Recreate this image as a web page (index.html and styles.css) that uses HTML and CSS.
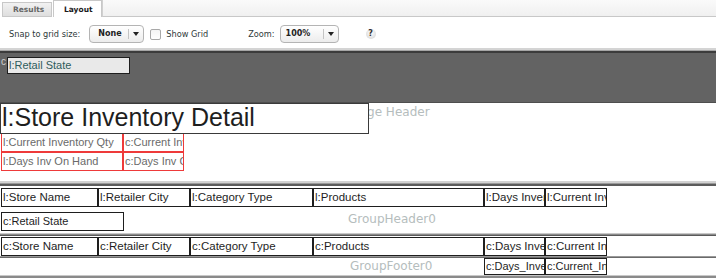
FILE: index.html
```html
<!DOCTYPE html>
<html>
<head>
<meta charset="utf-8">
<link rel="stylesheet" href="styles.css">
</head>
<body>
<div class="tabs">
  <div class="tab">Results</div>
  <div class="tab active">Layout</div>
  <div class="tab-fill"></div>
</div>
<div class="toolbar">
  <span class="tb-label snap">Snap to grid size:</span>
  <div class="select sel-none"><span class="sel-text">None</span><span class="sel-btn"><span class="arrow"></span></span></div>
  <span class="checkbox"></span>
  <span class="tb-label">Show Grid</span>
  <span class="tb-label zoom">Zoom:</span>
  <div class="select sel-zoom"><span class="sel-text">100%</span><span class="sel-btn"><span class="arrow"></span></span></div>
  <span class="help">?</span>
</div>
<div class="canvas">
  <div class="sep sep-top"></div>
  <section class="band band-dark">
    <span class="ghost">c</span>
    <div class="ctl ctl-state">l:Retail State</div>
  </section>
  <section class="band band-page">
    <span class="band-label lbl-page">Page Header</span>
    <div class="ctl ctl-title">l:Store Inventory Detail</div>
    <div class="red-grid">
      <div class="red">l:Current Inventory Qty</div>
      <div class="red">c:Current Inventory Qty</div>
      <div class="red">l:Days Inv On Hand</div>
      <div class="red">c:Days Inv On Hand</div>
    </div>
  </section>
  <div class="sep"></div>
  <section class="band band-group">
    <span class="band-label lbl-group">GroupHeader0</span>
    <div class="row">
      <div class="cell w1">l:Store Name</div>
      <div class="cell w2">l:Retailer City</div>
      <div class="cell w3">l:Category Type</div>
      <div class="cell w4">l:Products</div>
      <div class="cell w5">l:Days Inventory</div>
      <div class="cell w6">l:Current Inventory</div>
    </div>
    <div class="cell ctl-cstate">c:Retail State</div>
  </section>
  <div class="sep sep-mid"></div>
  <section class="band band-detail">
    <div class="row">
      <div class="cell w1">c:Store Name</div>
      <div class="cell w2">c:Retailer City</div>
      <div class="cell w3">c:Category Type</div>
      <div class="cell w4">c:Products</div>
      <div class="cell w5">c:Days Inventory</div>
      <div class="cell w6">c:Current Inventory</div>
    </div>
  </section>
  <div class="sep sep-thin"></div>
  <section class="band band-footer">
    <span class="band-label lbl-footer">GroupFooter0</span>
    <div class="row row-footer">
      <div class="cell w5 fcell">c:Days_Inventory</div>
      <div class="cell w6 fcell">c:Current_Inventory</div>
    </div>
  </section>
  <div class="sep sep-bottom"></div>
</div>
</body>
</html>
```

FILE: styles.css
```css
html, body {
  margin: 0;
  padding: 0;
  background: #fff;
}
body {
  width: 716px;
  height: 278px;
  overflow: hidden;
  font-family: "DejaVu Sans", Verdana, sans-serif;
}

/* tabs */
.tabs {
  display: flex;
  height: 17px;
  align-items: flex-end;
}
.tab {
  box-sizing: border-box;
  font-size: 7.5px;
  font-weight: bold;
  color: #666;
  height: 15px;
  width: 50px;
  margin-left: 2px;
  padding-left: 10px;
  line-height: 13px;
  background: linear-gradient(#f2f2f2, #dedede);
  border: 1px solid #c8c8c8;
}
.tab.active {
  height: 17px;
  width: 49px;
  margin-left: 1px;
  background: #fff;
  color: #1a1a1a;
  border-bottom: none;
  line-height: 17px;
}
.tab-fill {
  flex: 1;
  height: 17px;
  box-sizing: border-box;
  border-left: 1px solid #d0d0d0;
  border-bottom: 1px solid #c8c8c8;
  background: linear-gradient(#fafafa, #f0f0f0);
}

/* toolbar */
.toolbar {
  display: flex;
  align-items: center;
  height: 31px;
  padding-top: 3px;
  box-sizing: border-box;
}
.tb-label {
  font-size: 8.2px;
  color: #2f3a3a;
}
.snap { margin-left: 9px; }
.select {
  box-sizing: border-box;
  display: flex;
  align-items: stretch;
  height: 18px;
  border: 1px solid #b4b4b4;
  border-radius: 4px;
  background: linear-gradient(#ffffff, #ececec);
}
.sel-none { width: 55px; margin-left: 9px; }
.sel-zoom { width: 59px; margin-left: 5px; }
.sel-text {
  flex: 1;
  font-size: 8px;
  font-weight: bold;
  color: #222;
  line-height: 16px;
  padding-left: 8px;
}
.sel-zoom .sel-text { padding-left: 5px; }
.sel-btn {
  width: 14px;
  display: flex;
  align-items: center;
  justify-content: center;
  border-left: 1px solid #c4c4c4;
  margin: 3px 0;
}
.arrow {
  width: 0;
  height: 0;
  border-left: 3px solid transparent;
  border-right: 3px solid transparent;
  border-top: 4px solid #222;
}
.checkbox {
  box-sizing: border-box;
  width: 11px;
  height: 11px;
  margin-left: 6px;
  margin-right: 5px;
  border: 1px solid #a8a8a8;
  border-radius: 2px;
  background: linear-gradient(#f4f4f4, #ffffff);
}
.zoom { margin-left: 40px; }
.help {
  margin-left: 27px;
  width: 10px;
  height: 10px;
  border-radius: 50%;
  background: radial-gradient(circle at 50% 40%, #ffffff, #d0d0d0);
  font-size: 8px;
  font-weight: bold;
  color: #333;
  text-align: center;
  line-height: 10px;
}

/* canvas */
.canvas {
  font-family: "Liberation Sans", Arial, sans-serif;
}
.sep {
  height: 6px;
  background: linear-gradient(#ffffff 0 1px, #d2d2d2 1px 3px, #9a9a9a 3px 4px, #5c5c5c 4px 6px);
}
.sep-top {
  height: 5px;
  background: linear-gradient(#d4d4d4 0 2px, #a6a6a6 2px 3px, #3c3c3c 3px 5px);
}
.sep-mid {
  height: 3px;
  background: linear-gradient(#c8c8c8 0 1px, #8a8a8a 1px 2px, #5a5a5a 2px 3px);
}
.sep-thin {
  height: 2px;
  background: linear-gradient(#9a9a9a 0 1px, #6a6a6a 1px 2px);
}
.sep-bottom {
  height: 3px;
  background: linear-gradient(#c8c8c8 0 1px, #8a8a8a 1px 3px);
}
.band {
  position: relative;
  box-sizing: border-box;
}
.band-dark {
  height: 50px;
  background: #636363;
  border-bottom: 1px solid #4e4e4e;
  padding: 4px 0 0 7px;
}
.ghost {
  position: absolute;
  left: 1px;
  top: 3px;
  font-size: 10px;
  color: #cfcfcf;
}
.ctl {
  box-sizing: border-box;
  white-space: nowrap;
  overflow: hidden;
}
.ctl-state {
  position: relative;
  width: 123px;
  height: 17px;
  border: 1px solid #1e1e1e;
  background: #e9e9e9;
  color: #2f5c5c;
  font-size: 11px;
  line-height: 14px;
  padding-left: 1px;
}
.band-page {
  height: 77px;
}
.band-label {
  position: absolute;
  font-family: "DejaVu Sans", Verdana, sans-serif;
  font-size: 12px;
  color: #b5bdbd;
  white-space: nowrap;
}
.lbl-page { left: 353px; top: 2px; }
.lbl-group { left: 348px; top: 26px; }
.lbl-footer { left: 350px; top: 1px; }
.ctl-title {
  position: relative;
  width: 369px;
  height: 31px;
  border: 1px solid #3a3a3a;
  background: #fff;
  color: #1e1e1e;
  font-size: 25px;
  line-height: 27px;
  padding-left: 1px;
}
.red-grid {
  display: grid;
  grid-template-columns: 122px 61px;
  grid-template-rows: 19px 19px;
  margin-left: 1px;
  margin-top: -1px;
}
.red {
  box-sizing: border-box;
  border: 1px solid #ee3a3a;
  color: #6a6a6a;
  font-size: 11px;
  line-height: 16px;
  padding-left: 1px;
  white-space: nowrap;
  overflow: hidden;
}
.band-group {
  height: 47px;
  padding-top: 2px;
}
.row {
  display: flex;
  padding-left: 1px;
}
.cell {
  box-sizing: border-box;
  height: 19px;
  border: 1px solid #1e1e1e;
  color: #1e1e1e;
  font-size: 11.5px;
  line-height: 16px;
  padding-left: 1px;
  white-space: nowrap;
  overflow: hidden;
  background: #fff;
}
.w1 { width: 97px; }
.w2 { width: 92px; }
.w3 { width: 123px; }
.w4 { width: 171px; }
.w5 { width: 61px; }
.w6 { width: 62px; }
.ctl-cstate {
  width: 123px;
  margin: 5px 0 0 1px;
  font-size: 11px;
}
.band-detail {
  height: 20px;
  padding-top: 1px;
}
.band-footer {
  height: 17px;
}
.row-footer {
  padding-left: 484px;
  position: relative;
}
.fcell {
  height: 17px;
  line-height: 14px;
  font-size: 11px;
}
```
